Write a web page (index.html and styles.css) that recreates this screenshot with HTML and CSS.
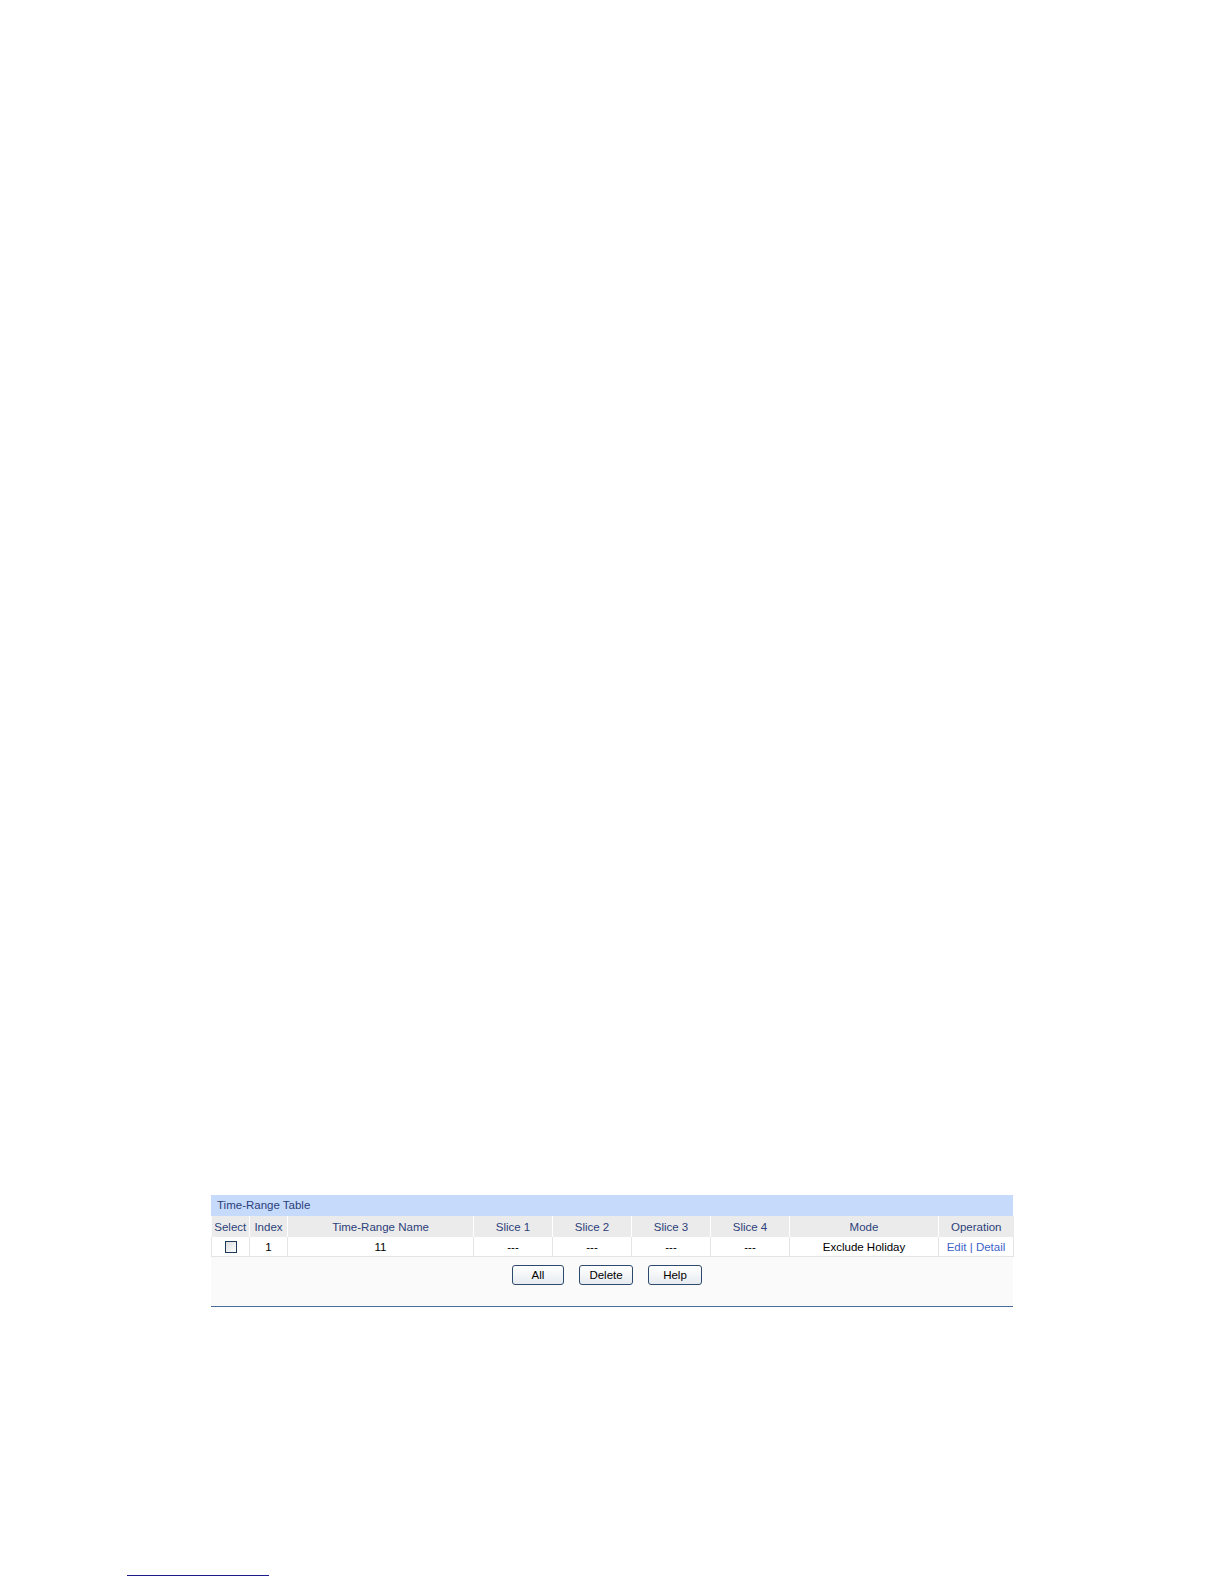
FILE: index.html
```html
<!DOCTYPE html>
<html>
<head>
<meta charset="utf-8">
<title>Time-Range Table</title>
<link rel="stylesheet" href="styles.css">
</head>
<body>
<div class="page">
  <div class="panel">
    <div class="title">Time-Range Table</div>
    <table class="grid">
      <colgroup>
        <col class="c-select"><col class="c-index"><col class="c-name">
        <col class="c-slice"><col class="c-slice"><col class="c-slice"><col class="c-slice">
        <col class="c-mode"><col class="c-op">
      </colgroup>
      <thead>
        <tr>
          <th>Select</th><th>Index</th><th>Time-Range Name</th>
          <th>Slice 1</th><th>Slice 2</th><th>Slice 3</th><th>Slice 4</th>
          <th>Mode</th><th>Operation</th>
        </tr>
      </thead>
      <tbody>
        <tr>
          <td><span class="check"></span></td>
          <td>1</td><td>11</td>
          <td>---</td><td>---</td><td>---</td><td>---</td>
          <td>Exclude Holiday</td>
          <td><a class="lnk" href="#">Edit</a> <span class="sep">|</span> <a class="lnk" href="#">Detail</a></td>
        </tr>
      </tbody>
    </table>
    <div class="actions">
      <button class="btn btn-all">All</button>
      <button class="btn btn-del">Delete</button>
      <button class="btn btn-help">Help</button>
    </div>
  </div>
  <div class="footnote"></div>
</div>
</body>
</html>
```

FILE: styles.css
```css
html, body {
  margin: 0;
  padding: 0;
  background: #ffffff;
}
body {
  font-family: "Liberation Sans", Arial, sans-serif;
  font-size: 11.5px;
  color: #000;
}
.page {
  padding-top: 1195px;
}
.panel {
  margin-left: 211px;
  width: 802px;
  background: #fafafa;
  border-bottom: 1px solid #4a6e98;
  padding-bottom: 21px;
}
.title {
  height: 21px;
  line-height: 21px;
  background: #c6dafc;
  color: #2b3f7a;
  padding-left: 6px;
}
.grid {
  width: 802px;
  border-collapse: collapse;
  table-layout: fixed;
}
.c-select { width: 38px; }
.c-index { width: 38px; }
.c-name { width: 186px; }
.c-slice { width: 79px; }
.c-mode { width: 149px; }
.c-op { width: 75px; }
.grid th {
  height: 21px;
  padding: 0;
  background: #ebebeb;
  color: #2b3f7a;
  font-weight: normal;
  text-align: center;
  border-right: 1px solid #ffffff;
  white-space: nowrap;
}
.grid th:last-child { border-right: none; }
.grid td {
  height: 19px;
  padding: 0;
  background: #ffffff;
  text-align: center;
  border: 1px solid #e4e4e4;
  border-top: none;
  white-space: nowrap;
}
.check {
  display: inline-block;
  width: 10px;
  height: 10px;
  border: 1px solid #1f3b5c;
  background: linear-gradient(135deg, #dcdcdc, #ffffff);
  vertical-align: middle;
}
.lnk {
  color: #3c64c8;
  text-decoration: none;
}
.sep { color: #3c64c8; }
.actions {
  display: flex;
  justify-content: center;
  gap: 15px;
  padding-top: 8px;
  padding-right: 10px;
}
.btn {
  height: 20px;
  padding: 0;
  font-family: "Liberation Sans", Arial, sans-serif;
  font-size: 11.5px;
  color: #000;
  border: 1px solid #2d4a6e;
  border-radius: 3px;
  background: linear-gradient(#ffffff, #e6ebf0);
}
.btn-all { width: 52px; }
.btn-del { width: 54px; }
.btn-help { width: 54px; }
.footnote {
  margin-top: 268px;
  margin-left: 127px;
  width: 142px;
  border-top: 1px solid #1c1c8c;
}
```
